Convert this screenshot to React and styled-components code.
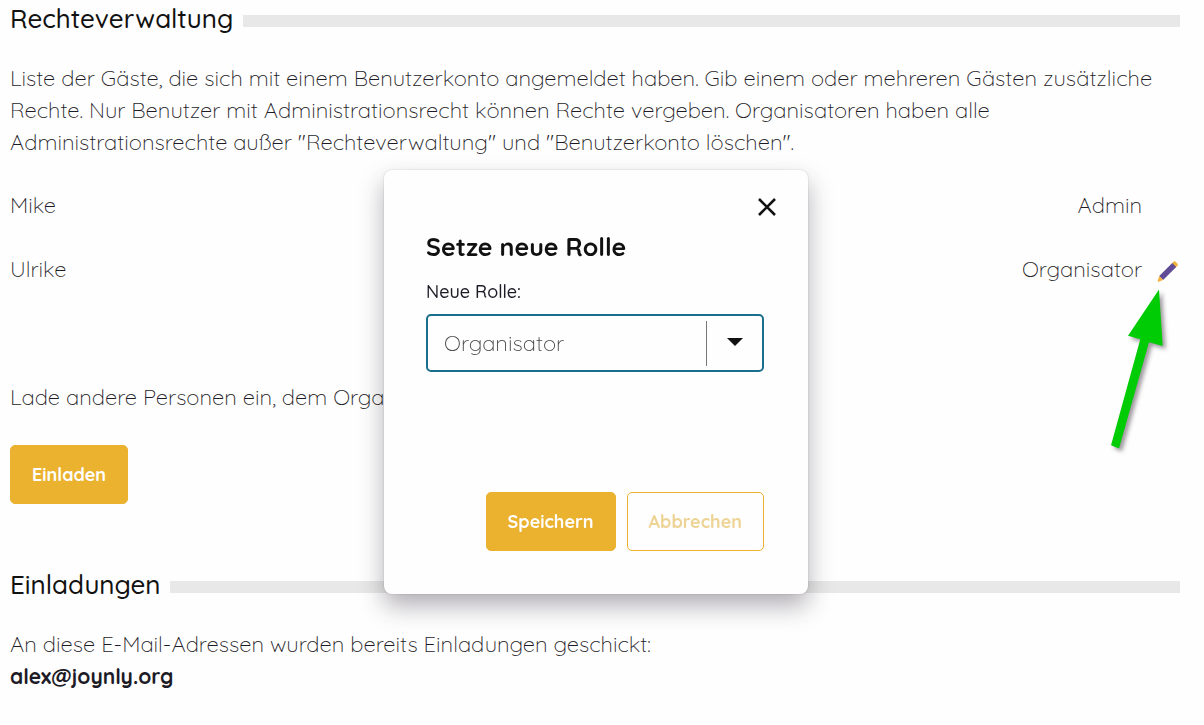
import React, { useState } from 'react';
import styled, { createGlobalStyle } from 'styled-components';

const AMBER = '#eab22e';
const TEAL = '#1a6f8c';
const INK = '#111111';
const TEXT = '#1d1b26';
const BAR = '#e7e8e7';

const GlobalStyle = createGlobalStyle`
  *, *::before, *::after {
    box-sizing: border-box;
  }

  body {
    margin: 0;
    background: #fefefe;
    color: ${TEXT};
    font-family: Quicksand, Inter, 'Liberation Sans', sans-serif;
    font-size: 22px;
    font-weight: 300;
    line-height: 32px;
  }

  button, select {
    font-family: inherit;
  }
`;

const GUESTS = [
  { name: 'Mike', role: 'Admin', editable: false },
  { name: 'Ulrike', role: 'Organisator', editable: true },
];

function PencilIcon() {
  return (
    <svg width="23" height="22" viewBox="0 0 23 22" aria-hidden="true">
      <path d="M14.500 3.800 16.800 1.600Q17.600.9 18.400 1.600L20.700 3.900Q21.300 4.600 20.600 5.400L18.400 7.700Z" fill="#f2b13b" />
      <path d="M2.200 16 15.300 3.100 19.200 6.900 6.100 20Z" fill="#5f4b96" />
      <path d="M2.200 16 6.100 20 1.600 21.700Q.6 21.900.7 20.900Z" fill="#f2b13b" />
    </svg>
  );
}

function Arrow() {
  return (
    <Arrow.Svg width="70" height="170" viewBox="0 0 70 170" aria-hidden="true">
      <path d="M49 0.500 52.700 57 39 53.300 9 159.500 1 156.300 30.300 50.300 18 46.700Z" fill="#00cc05" />
    </Arrow.Svg>
  );
}

Arrow.Svg = styled.svg`
  position: absolute;
  top: 36px;
  right: 0;
  pointer-events: none;
  filter: drop-shadow(3px 3px 2px rgba(60, 50, 60, 0.5));
`;

function SectionTitle({ children }) {
  return (
    <SectionTitle.Wrapper>
      <SectionTitle.Text>{children}</SectionTitle.Text>
      <SectionTitle.Bar />
    </SectionTitle.Wrapper>
  );
}

SectionTitle.Wrapper = styled.div`
  display: flex;
  align-items: center;
  gap: 10px;
  height: 38px;
`;

SectionTitle.Text = styled.h2`
  margin: 0;
  color: ${INK};
  font-size: 26px;
  font-weight: 500;
  line-height: 36px;
`;

SectionTitle.Bar = styled.span`
  flex: 1;
  height: 12px;
  margin-top: 4px;
  background: ${BAR};
`;

function RoleDialog({ onClose }) {
  const [role, setRole] = useState('Organisator');

  return (
    <RoleDialog.Overlay>
      <RoleDialog.Wrapper role="dialog" aria-labelledby="role-title">
        <RoleDialog.Close type="button" aria-label="Schließen" onClick={onClose}>
          <svg width="20" height="20" viewBox="0 0 20 20" aria-hidden="true">
            <path d="M2 2 18 18M18 2 2 18" stroke={INK} strokeWidth="2.6" fill="none" />
          </svg>
        </RoleDialog.Close>
        <RoleDialog.Title id="role-title">Setze neue Rolle</RoleDialog.Title>
        <RoleDialog.Label htmlFor="role">Neue Rolle:</RoleDialog.Label>
        <RoleDialog.Field>
          <RoleDialog.Select id="role" value={role} onChange={(event) => setRole(event.target.value)}>
            <option>Organisator</option>
            <option>Admin</option>
            <option>Gast</option>
          </RoleDialog.Select>
          <RoleDialog.Caret>
            <svg width="16" height="8" viewBox="0 0 16 8" aria-hidden="true">
              <path d="M0 0H16L8 8Z" fill={INK} />
            </svg>
          </RoleDialog.Caret>
        </RoleDialog.Field>
        <RoleDialog.Footer>
          <Button type="button" onClick={onClose}>Speichern</Button>
          <Button type="button" $outline onClick={onClose}>Abbrechen</Button>
        </RoleDialog.Footer>
      </RoleDialog.Wrapper>
    </RoleDialog.Overlay>
  );
}

RoleDialog.Overlay = styled.div`
  position: fixed;
  inset: 0;
  display: flex;
  justify-content: center;
  align-items: flex-start;
  padding: 170px 12px 0 0;
`;

RoleDialog.Wrapper = styled.div`
  display: flex;
  flex-direction: column;
  width: 424px;
  max-width: 100%;
  padding: 24px 44px 43px 42px;
  border-radius: 8px;
  background: #fefefe;
  box-shadow: 0 12px 24px rgba(45, 35, 50, 0.36), 0 0 2px rgba(45, 35, 50, 0.2);
`;

RoleDialog.Close = styled.button`
  display: flex;
  align-self: flex-end;
  margin-right: -16px;
  padding: 3px;
  border: 0;
  background: none;
  cursor: pointer;
`;

RoleDialog.Title = styled.h3`
  margin: 11px 0 0;
  color: ${INK};
  font-size: 25px;
  font-weight: 700;
  line-height: 32px;
`;

RoleDialog.Label = styled.label`
  margin-top: 17px;
  font-size: 18px;
  font-weight: 500;
  line-height: 24px;
`;

RoleDialog.Field = styled.div`
  display: flex;
  position: relative;
  margin-top: 10px;
`;

RoleDialog.Select = styled.select`
  flex: 1;
  height: 58px;
  padding: 0 60px 0 16px;
  border: 2px solid ${TEAL};
  border-radius: 5px;
  outline: none;
  appearance: none;
  background: #fefefe;
  color: #444444;
  font-size: 22px;
  font-weight: 300;
`;

RoleDialog.Caret = styled.span`
  position: absolute;
  top: 7px;
  right: 2px;
  display: flex;
  align-items: center;
  justify-content: center;
  width: 56px;
  height: 45px;
  padding-bottom: 3px;
  border-left: 1px solid #777777;
  pointer-events: none;
`;

RoleDialog.Footer = styled.div`
  display: flex;
  justify-content: flex-end;
  gap: 11px;
  margin-top: 120px;
`;

const Button = styled.button`
  height: 59px;
  padding: 0 21px;
  border: 1px solid ${AMBER};
  border-radius: 5px;
  background: ${({ $outline }) => ($outline ? '#fefefe' : AMBER)};
  color: ${({ $outline }) => ($outline ? '#edd394' : '#ffffff')};
  font-size: 18px;
  font-weight: 700;
  cursor: pointer;
`;

export default function App() {
  const [isDialogOpen, setIsDialogOpen] = useState(true);

  return (
    <>
      <GlobalStyle />
      <App.Page>
        <SectionTitle>Rechteverwaltung</SectionTitle>
        <App.Intro>
          Liste der Gäste, die sich mit einem Benutzerkonto angemeldet haben. Gib einem oder mehreren Gästen zusätzliche
          Rechte. Nur Benutzer mit Administrationsrecht können Rechte vergeben. Organisatoren haben alle
          Administrationsrechte außer "Rechteverwaltung" und "Benutzerkonto löschen".
        </App.Intro>
        <App.Guests>
          {GUESTS.map(({ name, role, editable }) => (
            <App.Guest key={name}>
              <App.GuestName>{name}</App.GuestName>
              <span>{role}</span>
              <App.GuestAction>
                {editable && (
                  <App.Edit type="button" aria-label="Rolle ändern" onClick={() => setIsDialogOpen(true)}>
                    <PencilIcon />
                  </App.Edit>
                )}
                {editable && <Arrow />}
              </App.GuestAction>
            </App.Guest>
          ))}
        </App.Guests>
        <App.Invite>
          <App.Text>Lade andere Personen ein, dem Organisationsteam beizutreten.</App.Text>
          <Button type="button">Einladen</Button>
        </App.Invite>
        <SectionTitle>Einladungen</SectionTitle>
        <App.Invited>
          <App.Text>An diese E-Mail-Adressen wurden bereits Einladungen geschickt:</App.Text>
          <App.Email>alex@joynly.org</App.Email>
        </App.Invited>
      </App.Page>
      {isDialogOpen && <RoleDialog onClose={() => setIsDialogOpen(false)} />}
    </>
  );
}

App.Page = styled.main`
  padding: 0 24px 32px 10px;
`;

App.Text = styled.p`
  margin: 0;
`;

App.Intro = styled(App.Text)`
  margin-top: 24px;
`;

App.Guests = styled.ul`
  display: flex;
  flex-direction: column;
  gap: 32px;
  margin: 31px 0 0;
  padding: 0;
  list-style: none;
`;

App.Guest = styled.li`
  display: flex;
  align-items: center;
`;

App.GuestName = styled.span`
  flex: 1;
`;

App.GuestAction = styled.span`
  display: flex;
  position: relative;
  justify-content: flex-end;
  width: 38px;
  height: 32px;
`;

App.Edit = styled.button`
  display: flex;
  align-items: center;
  padding: 4px 0 0;
  border: 0;
  background: none;
  cursor: pointer;
`;

App.Invite = styled.section`
  display: flex;
  flex-direction: column;
  align-items: flex-start;
  gap: 32px;
  margin: 96px 0 62px;
`;

App.Invited = styled.section`
  margin-top: 24px;
`;

App.Email = styled.strong`
  display: block;
  font-size: 21px;
  font-weight: 700;
`;
